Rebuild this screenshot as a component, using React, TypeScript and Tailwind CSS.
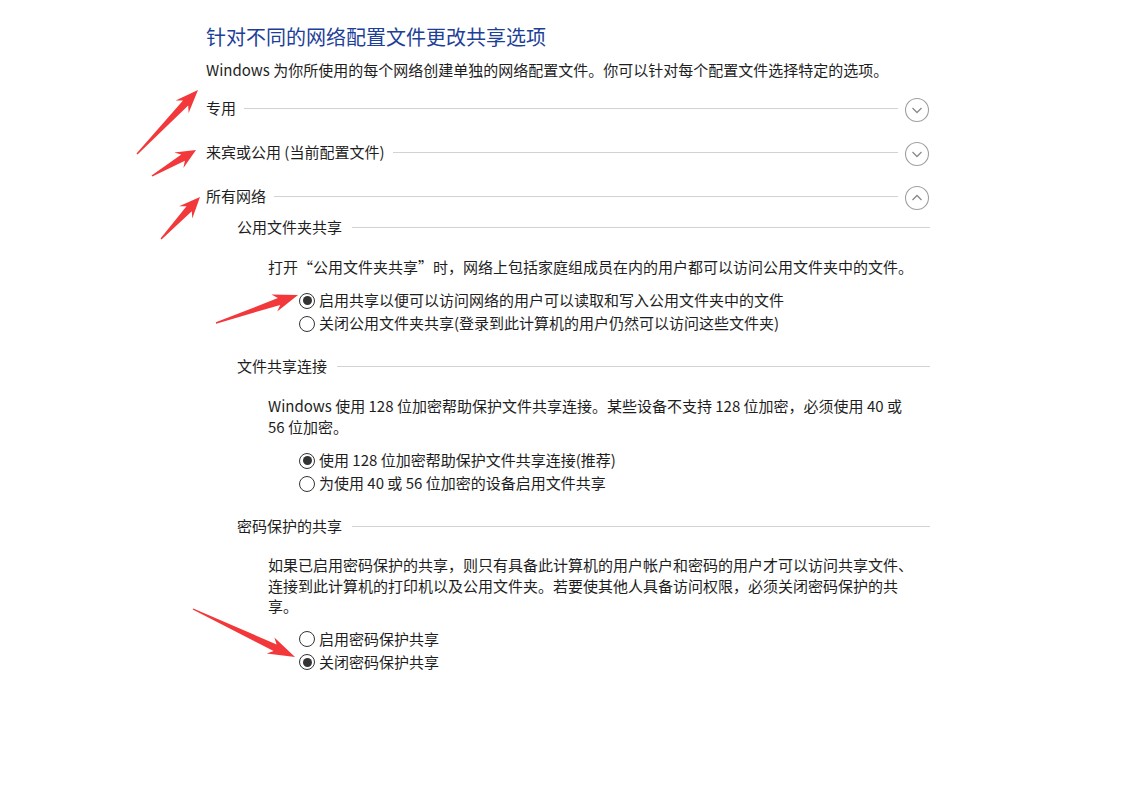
import React from "react";

const FONT = { fontFamily: '"Microsoft YaHei", "Noto Sans CJK SC", "Noto Sans", sans-serif' };

function arrowPoints(x1: number, y1: number, x2: number, y2: number, head = 20): string {
  const dx = x2 - x1;
  const dy = y2 - y1;
  const len = Math.hypot(dx, dy);
  const ux = dx / len;
  const uy = dy / len;
  const nx = -uy;
  const ny = ux;
  const at = (d: number, w: number) => `${(x1 + ux * d + nx * w).toFixed(1)},${(y1 + uy * d + ny * w).toFixed(1)}`;
  const b = len - head;
  return [
    at(0, 0.7),
    at(b + 4, 3.6),
    at(b - 1, 9),
    at(len, 0),
    at(b - 1, -9),
    at(b + 4, -3.6),
    at(0, -0.7),
  ].join(" ");
}

const ARROWS: [number, number, number, number, number][] = [
  [137, 154, 198, 90, 22],
  [152, 176, 196, 150, 19],
  [161, 239, 200, 197, 20],
  [216, 323, 298, 295, 24],
  [193, 609, 295, 657, 26],
];

function Chevron({ up }: { up?: boolean }) {
  return (
    <svg width="26" height="26" viewBox="0 0 26 26" className="shrink-0">
      <circle cx="13" cy="13" r="11.5" fill="white" stroke="#a0a0a0" strokeWidth="1.1" />
      {up ? (
        <polyline points="8.5,15 13,10.5 17.5,15" fill="none" stroke="#8a8a8a" strokeWidth="1.3" />
      ) : (
        <polyline points="8.5,11 13,15.5 17.5,11" fill="none" stroke="#8a8a8a" strokeWidth="1.3" />
      )}
    </svg>
  );
}

function ProfileRow({ label, up }: { label: string; up?: boolean }) {
  return (
    <div className="flex h-[44px] items-center">
      <span className="whitespace-nowrap text-[#1e1e1e]">{label}</span>
      <div className="ml-[8px] h-px flex-1 bg-[#d2d2d2]" />
      <div className="ml-[6px] mt-[3px]">
        <Chevron up={up} />
      </div>
    </div>
  );
}

function SubHeader({ label, className = "" }: { label: string; className?: string }) {
  return (
    <div className={`ml-[31px] flex h-[22px] items-center ${className}`}>
      <span className="whitespace-nowrap text-[#1e1e1e]">{label}</span>
      <div className="ml-[10px] h-px flex-1 bg-[#d2d2d2]" />
    </div>
  );
}

function Radio({ label, checked }: { label: string; checked?: boolean }) {
  return (
    <div className="flex h-[23px] items-center">
      <span className="flex h-[16px] w-[16px] items-center justify-center rounded-full border border-[#333] bg-white">
        {checked && <span className="h-[9px] w-[9px] rounded-full bg-[#333]" />}
      </span>
      <span className="ml-[4px] whitespace-nowrap text-[#1e1e1e]">{label}</span>
    </div>
  );
}

export default function App() {
  return (
    <div className="relative h-[805px] w-[1144px] overflow-hidden bg-white text-[15px]" style={FONT}>
      <div className="w-[930px] pl-[206px] pt-[23px]">
        <h1 className="text-[20px] leading-[28px] font-normal text-[#1e3f97]">针对不同的网络配置文件更改共享选项</h1>
        <p className="mt-[8px] leading-[22px] text-[#1e1e1e] whitespace-nowrap">
          Windows 为你所使用的每个网络创建单独的网络配置文件。你可以针对每个配置文件选择特定的选项。
        </p>

        <div className="mt-[5px]">
          <ProfileRow label="专用" />
          <ProfileRow label="来宾或公用 (当前配置文件)" />
          <ProfileRow label="所有网络" up />
        </div>

        <SubHeader label="公用文件夹共享" className="mt-[-2px]" />
        <p className="ml-[62px] mt-[18px] leading-[21px] text-[#1e1e1e] whitespace-nowrap">
          打开“公用文件夹共享”时，网络上包括家庭组成员在内的用户都可以访问公用文件夹中的文件。
        </p>
        <div className="ml-[93px] mt-[12px]">
          <Radio label="启用共享以便可以访问网络的用户可以读取和写入公用文件夹中的文件" checked />
          <Radio label="关闭公用文件夹共享(登录到此计算机的用户仍然可以访问这些文件夹)" />
        </div>

        <SubHeader label="文件共享连接" className="mt-[20px]" />
        <p className="ml-[62px] mt-[18px] leading-[21px] text-[#1e1e1e] whitespace-nowrap">
          Windows 使用 128 位加密帮助保护文件共享连接。某些设备不支持 128 位加密，必须使用 40 或
          <br />
          56 位加密。
        </p>
        <div className="ml-[93px] mt-[12px]">
          <Radio label="使用 128 位加密帮助保护文件共享连接(推荐)" checked />
          <Radio label="为使用 40 或 56 位加密的设备启用文件共享" />
        </div>

        <SubHeader label="密码保护的共享" className="mt-[20px]" />
        <p className="ml-[62px] mt-[18px] leading-[20.5px] text-[#1e1e1e] whitespace-nowrap">
          如果已启用密码保护的共享，则只有具备此计算机的用户帐户和密码的用户才可以访问共享文件、
          <br />
          连接到此计算机的打印机以及公用文件夹。若要使其他人具备访问权限，必须关闭密码保护的共
          <br />
          享。
        </p>
        <div className="ml-[93px] mt-[11px]">
          <Radio label="启用密码保护共享" />
          <Radio label="关闭密码保护共享" checked />
        </div>
      </div>

      <svg className="pointer-events-none absolute left-0 top-0" width="1144" height="805">
        {ARROWS.map(([x1, y1, x2, y2, h], i) => (
          <polygon key={i} points={arrowPoints(x1, y1, x2, y2, h)} fill="#f2383a" />
        ))}
      </svg>
    </div>
  );
}
